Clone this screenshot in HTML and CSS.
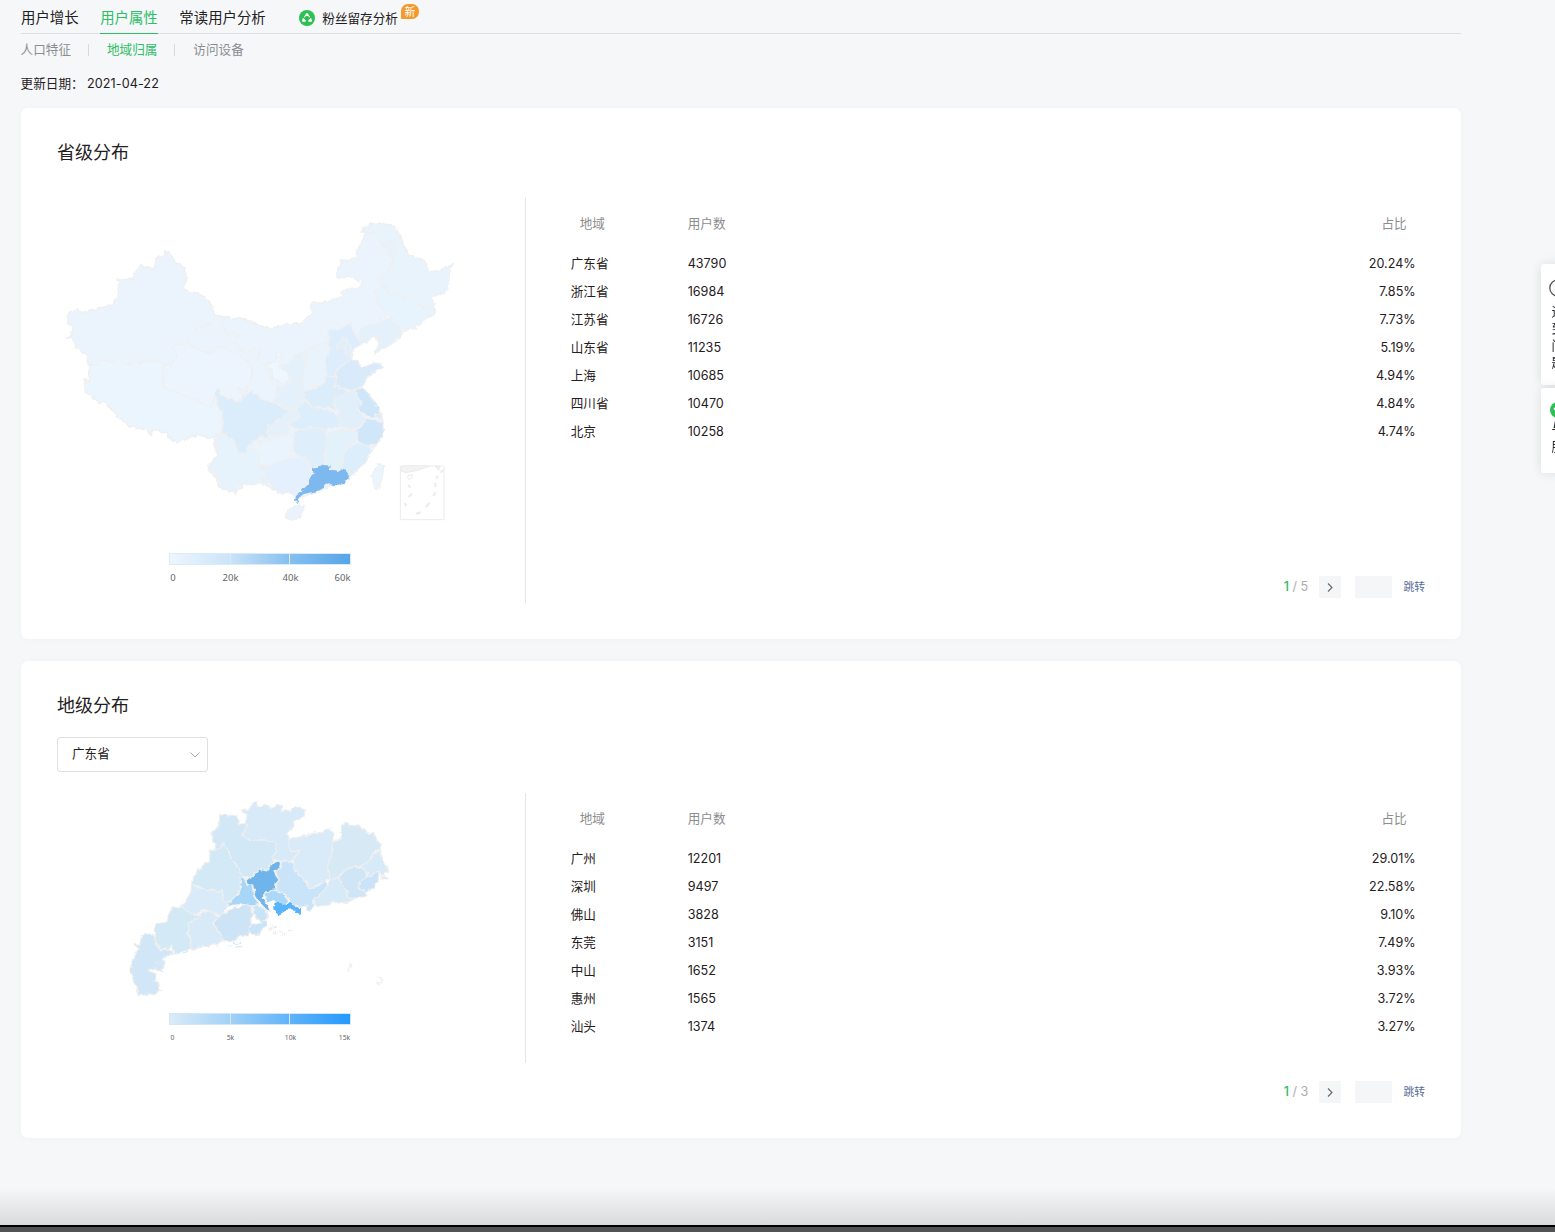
FILE: index.html
```html
<!DOCTYPE html>
<html lang="zh-CN">
<head>
<meta charset="utf-8">
<title>用户属性</title>
<link rel="stylesheet" href="styles.css">
</head>
<body>
<div class="page">
  <nav class="tabs">
    <a class="tab">用户增长</a>
    <a class="tab active">用户属性</a>
    <a class="tab">常读用户分析</a>
    <a class="tab-extra">
      <svg width="16" height="16" viewBox="0 0 16 16"><circle cx="8" cy="8" r="8" fill="#2fbf55"/><g fill="none" stroke="#fff" stroke-width="1.1"><path d="M5.200 7.200 8 4.200l2.800 3M4.400 8.200 3.900 11h3M11.600 8.200l.5 2.800h-3"/></g><g fill="#fff"><circle cx="8" cy="4.700" r="1.400"/><circle cx="4.700" cy="10.200" r="1.500"/><circle cx="11.300" cy="10.200" r="1.500"/></g></svg>
      <span>粉丝留存分析</span><em class="badge">新</em>
    </a>
  </nav>
  <nav class="subtabs"><a>人口特征</a><i></i><a class="active">地域归属</a><i></i><a>访问设备</a></nav>
  <p class="date"><span>更新日期：</span><span>2021-04-22</span></p>

  <section class="card province">
    <h2>省级分布</h2>
    <div class="content">
      <svg class="map" width="468" height="405" viewBox="57 198 468 405">
        <defs>
          <linearGradient id="scaleA"><stop offset="0" stop-color="#edf6fe"/><stop offset=".33" stop-color="#cbe4f8"/><stop offset=".66" stop-color="#86c0ef"/><stop offset="1" stop-color="#55a5e8"/></linearGradient>
          <filter id="coast" x="-5%" y="-5%" width="110%" height="110%" color-interpolation-filters="sRGB"><feTurbulence type="fractalNoise" baseFrequency=".07" numOctaves="2" seed="4"/><feDisplacementMap in="SourceGraphic" scale="14" xChannelSelector="R" yChannelSelector="G"/></filter>
        </defs>
        <g transform="translate(55 210) scale(.33333)" class="land" filter="url(#coast)">
          <path fill="#ebf3fd" d="M35 320 45 306 65 300 80 301 85 308 97 308 107 295 122 299 140 292 175 284 178 268 190 256 190 213 185 210 222 207 234 211 232 203 254 163 270 172 299 175 303 143 325 139 330 125 346 127 350 142 365 160 378 165 388 175 390 190 396 200 394 218 387 235 400 243 432 250 450 263 468 276 472 297 483 317 500 319 530 325 570 326 590 338 612 346 640 355 700 343 735 340 760 322 772 308 765 290 775 275 795 280 820 275 835 265 860 260 865 243 890 235 920 228 918 215 895 200 870 203 850 204 844 192 860 148 880 155 905 140 910 115 930 75 935 66 918 67 925 53 945 42 975 38 1005 47 1020 50 1035 75 1060 138 1000 318 915 365 890 445 920 530 950 560 980 610 985 640 965 700 935 750 878 808 825 830 730 865 710 852 675 848 620 820 565 825 542 850 490 830 483 802 457 776 485 735 475 677 458 685 430 673 390 688 375 697 348 692 335 668 295 658 285 675 280 660 225 650 180 610 150 575 135 580 92 545 88 508 105 510 100 490 105 467 97 455 97 437 62 413 60 395 37 381 50 376 50 344 35 344Z"/>
          <path fill="#ebf5fd" d="M105 467 125 465 145 450 170 458 185 450 210 463 250 461 265 455 300 452 328 463 323 525 370 550 430 570 450 588 472 584 478 578 500 605 503 640 497 670 475 677 458 685 430 673 405 680 390 688 375 697 348 692 342 678 335 668 310 660 295 658 285 675 280 660 260 657 225 650 210 635 190 622 180 610 150 575 135 580 115 562 92 545 88 508 100 515 105 510 100 490Z"/>
          <path fill="#ecf5fd" d="M328 463 352 466 355 450 366 445 365 432 350 410 395 400 430 420 470 430 480 420 488 408 520 420 550 435 585 460 592 490 585 510 572 530 575 545 548 535 562 553 550 575 530 572 500 558 488 535 478 555 472 584 450 588 430 570 395 562 370 550 330 535 323 525 328 500 323 490Z"/>
          <path fill="#ebf4fd" d="M395 400 405 380 430 352 470 340 483 317 500 320 503 345 515 372 530 370 548 372 535 395 560 420 575 430 590 420 620 418 608 440 612 455 630 470 640 485 650 510 665 530 660 570 645 582 620 580 610 565 590 545 572 530 585 510 592 490 585 460 550 435 520 420 488 408 470 430 430 420Z"/>
          <path fill="#eef6fe" d="m670 420 8 10-6 40 28 20 5 20-25 17-15-22-10-1-10-28-15-15 30-5Z"/>
          <g transform="translate(600)">
            <path fill="#e8f3fc" d="M325 53 345 42 375 38 405 47 420 50 435 75 445 100 455 120 460 138 485 143 510 155 522 185 550 182 575 170 592 160 585 185 580 225 568 252 548 255 532 265 540 298 520 297 500 290 480 275 460 262 435 260 420 258 400 250 385 225 372 208 400 185 402 170 415 150 405 130 380 100 370 78 360 70 330 68Z"/>
            <path fill="#e9f2fc" d="m383 103 30-11 12 15-7 35-15-12Z"/>
            <path fill="#e8f4fd" d="M385 225 400 250 430 260 460 262 480 275 500 290 520 300 540 298 538 315 528 322 518 318 500 340 485 345 485 357 460 355 440 372 430 345 405 320 395 303 385 300 365 280 370 265 360 250Z"/>
            <path fill="#e4f1fb" d="M405 320 430 345 440 372 415 400 385 415 358 432 372 400 370 385 355 380 335 400 320 395 308 380 320 355 340 345 390 330Z"/>
            <path fill="#e4f1fb" d="M160 418 145 430 150 460 145 500 145 535 142 545 155 580 155 590 130 590 100 600 65 578 50 580 65 555 65 530 90 525 105 520 105 490 80 480 82 465 100 462 120 435Z"/>
            <path fill="#e8f3fc" d="M160 418 215 395 220 410 218 425 225 430 212 460 215 475 210 515 180 530 145 535 145 500 150 450Z"/>
            <path fill="#deedfc" d="m225 355 10 8 25-8 25-17 10 25 10 20 17 15-22 15-10 18v14l-20 15-25 20-5 20-25-5-5-45 15-30-7-18 5-18-5-15Z"/>
            <path fill="#e1effc" d="m245 405 10-10 10-15 15 20 8 10 2 30-18-8-2-20-26 3Z"/><path fill="none" d="m270 412 10-12"/>
            <path fill="#d9ebfb" d="M285 450 310 455 318 470 340 468 355 458 380 462 385 475 365 480 345 495 320 530 290 540 265 537 235 525 245 500 240 490 260 465Z"/>
          </g>
          <g transform="translate(405 480)">
            <path fill="#e7f3fc" d="M80 210 90 190 105 190 120 205 135 220 150 250 170 250 175 225 200 195 215 220 190 215 195 235 210 250 205 285 235 315 215 335 200 342 185 340 170 345 160 342 138 350 137 370 115 362 105 355 85 350 90 330 80 322 72 300 52 296 55 285 75 265 83 250Z"/>
            <path fill="#dbecfb" d="m340 65 35-10 30-20v-17l30 2 5 20-10 9 50 13-15 13-30 8-5 17 15 20-30-5-50-7-20-23Z"/>
            <path fill="#cfe5f9" d="m460 55 25 10 32-15 23 25 10 20 15 15 10 22-5 12-35-5-25-12-10-30-20-25Z"/>
            <path fill="#e1effb" d="m470 65 20-3 15 18 10 25-12 15 22 25-15 25-20 8-35-8-15-25 5-25-15-20 5-17 25-8Z"/>
            <path fill="#dcedfb" d="m325 110 20-15 20 13 30 8 20 2 20 17 15 10v25l-45 8-35-6-40 8-35-17 35-18-10-20Z"/>
            <path fill="#d0e6f9" d="m525 145 25 3 25 12 8 10-8 30-15 20-25 10-30-15-5-35 15-12Z"/>
            <path fill="#d5e9fa" d="m555 134 20-1-2 15-18-5Z"/>
            <path fill="#dbecfb" d="M75 75 77 60 85 55 95 78 110 85 125 85 140 98 155 90 158 78 170 75 185 62 205 75 215 90 235 92 250 98 270 110 295 122 285 138 275 145 260 150 250 162 235 165 228 190 240 210 220 202 210 198 200 210 190 212 170 235 170 250 150 250 135 220 120 200 105 190 97 190 97 130 85 105Z"/>
            <path fill="#e4f1fb" d="m295 122 25-7 10 30-35 15 5 25-15 10-45 3-12-13 7-20 25-5Z"/>
            <path fill="#e9f4fd" d="m190 215 25 5 20-15 50-10 25 5 2 35-12 25-30 15-35 15-30-5 5-35-20-15Z"/>
            <path fill="#dfeefb" d="m315 185 55-13 35 8 7 35-7 35 5 40-20-5-25 10-15-30-30-10-10-25Z"/>
            <path fill="#e3f1fb" d="m412 190 43-12h35l10 12-5 25-30 25-10 35-5 23-25 2-20-15v-35Z"/>
            <path fill="#dcedfb" d="m465 240 35-20 35 10 10 8-10 20-5 17-30 25-25 28-5-28-18-5Z"/>
            <path fill="#e4f0fd" d="m205 285 30 5 25-14 40-11 45-5 20 35-5 35-40 40-50-2-25-18-5-15-25 2-2-8 22-14Z"/>
            <path fill="#7db9ee" stroke="none" d="m368 290 15 5 10-12 10 3 20 1-5 14 10-1 20 3 5-8 15 4 5 8v18l-8 13-25 8-18-3-22 2-4 14-23 6-32 6-16 14 5 10-8 7-7-12 3-12 17-15 22-23v-14l13-16Z"/>
            <path fill="#eaf3fd" d="m287 430 13-18 25-7 18 5-8 20-20 22-20-4-8-5Z"/>
            <path fill="#ebf5fd" d="m545 320 10-25 15-15 12 5-7 45-10 28-7-2-8-15Z"/>
          </g>
        </g>
        <g transform="translate(190 370) scale(.33333)">
          <g fill="#f3f3f3" stroke="#ececec" stroke-width="3"><path d="M473 391h1M454 384h1M531 323h1M614 268h1"/><path fill="#fff" d="M631 288h131v161H631Z"/><path d="m632 294 10-7h60l16 2-43 14-28 5-13-5Z"/><path d="m736 289 9 12 5-11Z"/></g>
          <g fill="none" stroke="#ebebeb" stroke-width="6"><path d="m752 308 8-9M739 326l5-9M736 338v12M736 367l-6 11M719 398l-11 13M692 427l-14 4M649 408l-5-9M666 371l-10 10M660 354l-4-10"/><path stroke-width="3" d="m654 317 13-3-2 9-9 6-3-6Z"/></g>
        </g>
        <rect x="169.500" y="553.500" width="181" height="11" fill="url(#scaleA)" stroke="#dcebf8"/>
        <path d="M230.500 554v10M289.500 554v10" stroke="#dce8f2"/>
        <g class="scale-text"><text x="173" y="581">0</text><text x="230.500" y="581">20k</text><text x="290.500" y="581">40k</text><text x="342.500" y="581">60k</text></g>
      </svg>
      <div class="data">
        <table>
          <thead><tr><th>地域</th><th>用户数</th><th>占比</th></tr></thead>
          <tbody>
            <tr><td>广东省</td><td>43790</td><td>20.24%</td></tr>
            <tr><td>浙江省</td><td>16984</td><td>7.85%</td></tr>
            <tr><td>江苏省</td><td>16726</td><td>7.73%</td></tr>
            <tr><td>山东省</td><td>11235</td><td>5.19%</td></tr>
            <tr><td>上海</td><td>10685</td><td>4.94%</td></tr>
            <tr><td>四川省</td><td>10470</td><td>4.84%</td></tr>
            <tr><td>北京</td><td>10258</td><td>4.74%</td></tr>
          </tbody>
        </table>
        <div class="pager"><b>1</b><span class="total">/ 5</span><button><svg width="22" height="22" viewBox="0 0 22 22"><path d="m9 7.500 4 4-4 4" fill="none" stroke="#666" stroke-width="1.100"/></svg></button><span class="page-input"></span><a>跳转</a></div>
      </div>
    </div>
  </section>

  <section class="card city">
    <h2>地级分布</h2>
    <div class="select"><span>广东省</span><svg width="10" height="6" viewBox="0 0 10 6"><path d="m.5.500 4.500 4.500L9.500.500" fill="none" stroke="#aaa"/></svg></div>
    <div class="content">
      <svg class="map" width="468" height="270" viewBox="57 793 468 270">
        <defs>
          <linearGradient id="scaleB"><stop offset="0" stop-color="#dcebf7"/><stop offset=".33" stop-color="#a2d2f8"/><stop offset=".66" stop-color="#60b3fa"/><stop offset="1" stop-color="#2399ff"/></linearGradient>
        </defs>
        <g transform="translate(120 790) scale(.33333)" class="land" filter="url(#coast)">
          <path fill="#d8eaf7" d="M367 58 378 57 385 62 390 45 405 38 415 50 440 45 452 55 465 50 470 44 485 46 485 65 497 58 510 62 525 50 540 48 545 57 555 62 552 80 530 90 520 98 523 108 500 130 512 145 508 165 518 185 540 180 518 212 490 215 460 208 455 200 470 185 462 165 450 155 435 150 415 150 390 152 368 135 374 115 380 105 378 75Z"/>
          <path fill="#d3e8f6" d="m300 72 25 3 25 2 6 25 24 0-12 33 22 17 25-2 35 1 12 7 8 27-15 17 8 12-13 12-10 14-20-2-20 17-22 10-18-10-5-20-20-25-10-30-15-18-12 16h-13l3-13-11-15-5-22 20-13 5-17Z"/>
          <path fill="#d3e9f6" d="m268 180 12 2 18-4 12-16 15 18 10 30 20 25 13 27-8 23-2 25-38 30-15-10 3-25-53-7-40-18 3-18 13-20 14-7 10-15 15-5Z"/>
          <path fill="#d9eaf8" d="m215 280 25 14 15 4 30 4 23 3v25l17 15-12 22-13 11-20-6-20-14-25 10-10 7-25-10-15-20 20-25 8-15Z"/>
          <path fill="#d3e9f6" d="m145 365 10-10 30-5 15 15 25 10 20-5-10 15-25 15-10 30 12 15 3 30-20 8-30 7-10-25-10 13-23-3-14-15-3-57 35-8 8-20Z"/>
          <path fill="#d1e7f7" d="m65 437 20-4 18 0 5 27 14 20 23-3 20 13-30 10-5 10 3 20-20 12-20-5-8 3 20 10v25l13 10v15l-13 12-10 5-15-5-15 5-12-2-1-20-12-20-10-35 5-27 10-12v-15l13-7-16-18 18 2Z"/>
          <path fill="#d8eaf7" d="m240 372 25-14 20 12 5 15-10 15 20 30 12 20-17 10-15 2-15 7-25 3-25 7-3-34-10-20 6-25 27-15Z"/>
          <path fill="#cde4f7" d="m340 352 15 2 20-9 20 5 5 25-10 15 8 20-10 15-3 15-15 0-10-5-10 8-10 12-28 0-12-25-20-30 10-15 30-20Z"/>
          <path fill="#a8d6f8" d="m360 263 13 2 7 15 15 5 10 35 10 25-20 3-25-6-25 3-25 0 12-14 26-19 4-27Z"/>
          <path fill="#c9e3f8" d="M485 215 505 212 515 215 525 240 550 265 560 282 570 295 600 285 612 275 622 290 605 310 580 328 582 345 575 360 560 362 560 345 535 350 508 335 500 315 470 305 470 280 478 270 465 245 485 230Z"/>
          <path fill="#70b4ec" d="m378 270 22-12 20-20 20 5 10-15 10-10 15-5 10 7-2 12-21 13 8 15 8 10-10 10v20l-18 4-18 4-2 17 10 15 12 25-12-5-25-25-10-25-7-25-16-2Z"/>
          <path fill="#a9d8fa" d="m432 310 28-10 30 8 12 17-2 23-15-3-25-10-20 0Z"/>
          <path fill="#57b3fa" stroke="none" d="m460 340 10-4 10 2 20 10 7-12 10 5 10 10 16 4v17l-10 3-8-15-10-2-15 2-10 7-15 8-15-17Z"/>
          <path fill="#c9e3f8" d="m400 348 15-4 15 11 15 17-5 18-15 10-15-15-10-15ZM388 412l17-12 15 2 20-12-2 15-13 15-15 18-20-10Z"/>
          <path fill="#d9eaf8" d="m508 150 25-8 17-5 10 5 15-12 25-2 15-7 15-5 12 14-4 15 3 20-6 25-10 30 10 45-23 10-42 20-20-30-30-30 0-25 20-30-28 5-5-15Z"/>
          <path fill="#d7e9f4" d="m662 115 6-13 15-2 17 8 15-4 15 16 15 10 20-2-3 12 18 20 2 20-17 5-20 30-30 15-35 5-25 27-23 8-10-40 13-40 3-35 22-7Z"/>
          <path fill="#d7eaf7" d="m782 180 5 25 8 15 12 25-17 3 0 14-15-17-30 17-10-22-15-12 25-13 20-25Z"/>
          <path fill="#cbe3f8" d="m775 245 3 25-12 13-6 12-25 10-23-10 13-30 20-3ZM785 262h18v5h-18Z"/>
          <path fill="#d0e6f7" d="m655 262 25-27 35-5 20 10 5 22-22 13-3 20 20 10 7 13-37 7-25-5 2-20-22-15Z"/>
          <path fill="#d7eaf7" d="m655 262 10 23 17 15-2 20 25 5-15 10-30 5-20-5-12 10-18 5-25-5-5-17 25-18 25-40Z"/>
          <path fill="#d1e7f7" stroke="#d9eaf6" d="M105 516h25v7h-25ZM90 532h17l12 8-20-3ZM120 540l8 5-5-1ZM120 604l5-1ZM338 460h25M345 470h22M328 468h5M191 490l14-7M290 468h5"/>
          <path fill="none" stroke="#eaeaea" stroke-width="4" stroke-dasharray="5 3" d="M450 408h22l-24 11 22 12M480 437l34-17M478 425l15 3"/>
          <path fill="none" stroke="#efefef" stroke-width="5" d="M768 562q18-7 18 8t-18 7M684 523l10 1-4 10-6-3M682 540h6"/>
        </g>
        <rect x="169.500" y="1013.500" width="181" height="11" fill="url(#scaleB)" stroke="#d4e7f7"/>
        <path d="M230.500 1014v10M289.500 1014v10" stroke="#d8e8f4"/>
        <g class="scale-text small"><text x="172.500" y="1040">0</text><text x="230.500" y="1040">5k</text><text x="290.500" y="1040">10k</text><text x="344.500" y="1040">15k</text></g>
      </svg>
      <div class="data">
        <table>
          <thead><tr><th>地域</th><th>用户数</th><th>占比</th></tr></thead>
          <tbody>
            <tr><td>广州</td><td>12201</td><td>29.01%</td></tr>
            <tr><td>深圳</td><td>9497</td><td>22.58%</td></tr>
            <tr><td>佛山</td><td>3828</td><td>9.10%</td></tr>
            <tr><td>东莞</td><td>3151</td><td>7.49%</td></tr>
            <tr><td>中山</td><td>1652</td><td>3.93%</td></tr>
            <tr><td>惠州</td><td>1565</td><td>3.72%</td></tr>
            <tr><td>汕头</td><td>1374</td><td>3.27%</td></tr>
          </tbody>
        </table>
      </div>
    </div>
    <div class="pager"><b>1</b><span class="total">/ 3</span><button><svg width="22" height="22" viewBox="0 0 22 22"><path d="m9 7.500 4 4-4 4" fill="none" stroke="#666" stroke-width="1.100"/></svg></button><span class="page-input"></span><a>跳转</a></div>
  </section>
  <footer class="bottom"></footer>
</div>
<aside class="float">
  <div class="float-card notice"><svg width="18" height="18" viewBox="0 0 18 18"><circle cx="9" cy="9" r="8.200" fill="none" stroke="#555" stroke-width="1.300"/></svg><span>遇</span><span>到</span><span>问</span><span>题</span></div>
  <div class="float-card service"><svg width="16" height="16" viewBox="0 0 16 16"><circle cx="8" cy="8" r="8" fill="#2fbf55"/><path d="m4 6 3 4 6-1" fill="none" stroke="#fff" stroke-width="1.500"/></svg><span>与</span><span>服</span></div>
</aside>
</body>
</html>
```
FILE: styles.css
```css
* { box-sizing: border-box; }
body {
  margin: 0;
  background: #f5f7f9;
  color: #1f2022;
  font: 12.6px/20px Inter, "Noto Sans CJK SC", sans-serif;
  overflow: hidden;
}
.page { display: flex; flex-direction: column; height: 1232px; }
.tabs {
  display: flex;
  width: 1440px;
  height: 34px;
  margin-left: 21px;
  border-bottom: 1px solid #dedfe2;
  font-size: 14.4px;
  line-height: 35px;
}
.tab { height: 34px; margin-right: 21.6px; }
.tab.active { color: #2dbe67; border-bottom: 1px solid #2dbe67; }
.tab-extra { display: flex; align-items: center; margin-left: 12px; height: 36px; font-size: 12.6px; }
.tab-extra span { margin: 1px 0 0 7px; }
.badge {
  align-self: flex-start;
  width: 18px;
  height: 15px;
  margin: 4px 0 0 3px;
  border-radius: 7px 7px 7px 1px;
  background: #f39a2d;
  color: #fff;
  font: normal 10.8px/14px "Noto Sans CJK SC", sans-serif;
  text-align: center;
}
.subtabs { display: flex; align-items: center; height: 32px; margin-left: 20.6px; color: #8c8d90; }
.subtabs i { width: 1px; height: 12px; margin: 0 18px 0 17px; background: #d9dadd; }
.subtabs .active { color: #2dbe67; }
.date { display: flex; gap: 3.500px; margin: 8px 0 14px 20.6px; }
.date span:last-child { letter-spacing: .08px; }
.card {
  display: flex;
  flex-direction: column;
  width: 1440px;
  margin: 0 0 22px 21px;
  padding: 30px 36px 0;
  border-radius: 7px;
  background: #fff;
  box-shadow: 0 1px 8px rgba(0, 0, 0, .025);
}
.province { height: 531px; }
.city { height: 477px; margin-bottom: 0; }
h2 { margin: 0; font-size: 18px; line-height: 30px; font-weight: 400; }
.province .content { height: 405px; margin-top: 30px; }
.city .content { height: 270px; margin-top: 21px; }
.content { display: flex; }
.map { display: block; flex: none; }
.data { display: flex; flex: 1; flex-direction: column; border-left: 1px solid #e4e5e7; }
table { width: 845px; margin-left: 44.700px; border-spacing: 0; table-layout: fixed; }
th { height: 52px; padding: 0; color: #8c8d90; font-weight: 400; text-align: left; }
th:first-child { width: 117px; padding-left: 9px; }
th:last-child, td:last-child { text-align: right; }
th:last-child { padding-right: 9px; }
td { height: 28px; padding: 0; }
.pager { display: flex; align-items: center; justify-content: flex-end; height: 22px; color: #aaabad; }
.province .pager { margin-top: auto; margin-bottom: 5px; }
.city .pager { margin-top: 18px; }
.pager b { color: #2dbe67; font-weight: 500; }
.pager .total { width: 17px; margin: 0 10px 0 3.500px; white-space: nowrap; }
.pager button { width: 22px; height: 22px; padding: 0; border: 0; background: #f5f6f8; }
.pager button svg { display: block; }
.page-input { width: 37px; height: 22px; margin: 0 11px 0 14px; background: #f5f6f8; }
.pager a { padding-top: 2px; color: #576b95; font-size: 10.800px; }
.select {
  display: flex;
  align-items: center;
  justify-content: space-between;
  width: 151px;
  height: 35px;
  margin-top: 16px;
  padding: 0 7px 1px 14px;
  border: 1px solid #dedfe2;
  border-radius: 3px;
}
.select svg { margin-top: 2px; }
.land { stroke: #efefef; stroke-width: 3.500; stroke-linejoin: round; }
.scale-text { fill: #666; font: 9.500px "Noto Sans", sans-serif; text-anchor: middle; }
.scale-text.small { font-size: 6.800px; }
.bottom {
  height: 45px;
  margin-top: auto;
  border-bottom: 5px solid #515253;
  background: linear-gradient(#f5f7f9, #dadbdd 38px, #000 38px);
}
.float { position: fixed; top: 264px; left: 1541px; width: 42px; }
.float-card {
  display: flex;
  flex-direction: column;
  background: #fff;
  border-radius: 3px;
  box-shadow: 0 0 12px rgba(0, 0, 0, .1);
  font-size: 12.600px;
  line-height: 17px;
}
.float-card svg { margin-left: 8px; }
.float-card span { margin-left: 10.600px; }
.notice { height: 121px; padding-top: 15px; margin-bottom: 3px; }
.notice svg { margin-bottom: 6px; }
.service { height: 85px; padding-top: 14px; }
.service svg { margin-left: 9px; }
.service span { line-height: 19px; }
```
